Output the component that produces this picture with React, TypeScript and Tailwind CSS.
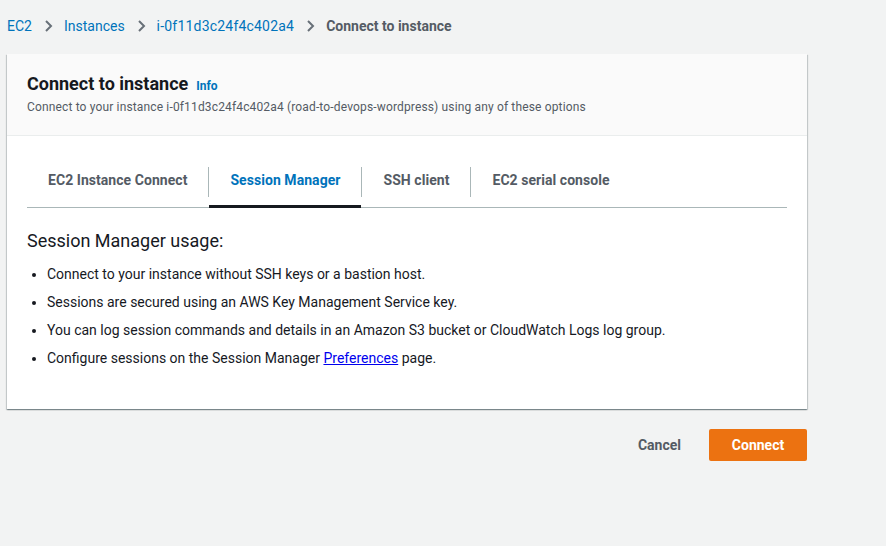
import React from "react";

const font = { fontFamily: "Roboto, 'Open Sans', Arial, sans-serif" };

function Chevron() {
  return (
    <svg width="16" height="16" viewBox="0 0 16 16" className="mx-[8px] shrink-0">
      <path d="M6 3l5 5-5 5" fill="none" stroke="#687078" strokeWidth="2" />
    </svg>
  );
}

const tabs = ["EC2 Instance Connect", "Session Manager", "SSH client", "EC2 serial console"];

export default function App() {
  return (
    <div className="min-h-[546px] w-[886px] bg-[#f2f3f3] text-[#16191f]" style={font}>
      {/* Breadcrumbs */}
      <nav className="flex items-center h-[52px] pl-[7px] text-[14px]">
        <span className="text-[#0073bb]">EC2</span>
        <Chevron />
        <span className="text-[#0073bb]">Instances</span>
        <Chevron />
        <span className="text-[#0073bb] tracking-[0.2px]">i-0f11d3c24f4c402a4</span>
        <Chevron />
        <span className="text-[#545b64] font-bold">Connect to instance</span>
      </nav>

      {/* Card */}
      <div className="ml-[7px] w-[800px] mt-[2px] bg-white shadow-[0_1px_1px_0_rgba(0,28,36,0.3),1px_1px_1px_0_rgba(0,28,36,0.15),-1px_1px_1px_0_rgba(0,28,36,0.15)]">
        <div className="bg-[#fafafa] border-b border-[#eaeded] px-[20px] pt-[19px] pb-[20px]">
          <div className="flex items-baseline gap-[8px]">
            <h1 className="text-[18px] font-bold leading-[22px]">Connect to instance</h1>
            <span className="text-[12px] font-bold text-[#0073bb]">Info</span>
          </div>
          <p className="text-[12px] text-[#545b64] mt-[4px] leading-[16px] tracking-[0.15px]">
            Connect to your instance i-0f11d3c24f4c402a4 (road-to-devops-wordpress) using any of these options
          </p>
        </div>

        <div className="px-[20px] pt-[16px] pb-[37px]">
          <div className="flex border-b border-[#aab7b8] h-[56px]">
            {tabs.map((t, i) => (
              <div key={t} className="flex items-center">
                {i > 0 && <div className="w-px h-[30px] mt-[4px] bg-[#aab7b8]" />}
                <div
                  className={`h-full flex items-center pt-[4px] px-[21px] text-[14px] font-bold tracking-[0.05px] border-b-[3px] -mb-px ${
                    i === 1 ? "text-[#0073bb] border-[#16191f]" : "text-[#545b64] border-transparent"
                  }`}
                >
                  {t}
                </div>
              </div>
            ))}
          </div>

          <h2 className="text-[18px] leading-[22px] mt-[22px]">Session Manager usage:</h2>
          <ul className="mt-[8px] text-[14px] leading-[28px] list-disc pl-[20px]">
            <li>Connect to your instance without SSH keys or a bastion host.</li>
            <li>Sessions are secured using an AWS Key Management Service key.</li>
            <li>You can log session commands and details in an Amazon S3 bucket or CloudWatch Logs log group.</li>
            <li>
              Configure sessions on the Session Manager{" "}
              <a className="text-[#0000ee] underline">Preferences</a> page.
            </li>
          </ul>
        </div>
      </div>

      {/* Footer actions */}
      <div className="w-[807px] flex justify-end items-center gap-[28px] mt-[20px]">
        <button className="text-[14px] font-bold text-[#545b64]">Cancel</button>
        <button className="h-[32px] w-[98px] rounded-[2px] bg-[#ec7211] text-white text-[14px] font-bold">
          Connect
        </button>
      </div>
    </div>
  );
}
